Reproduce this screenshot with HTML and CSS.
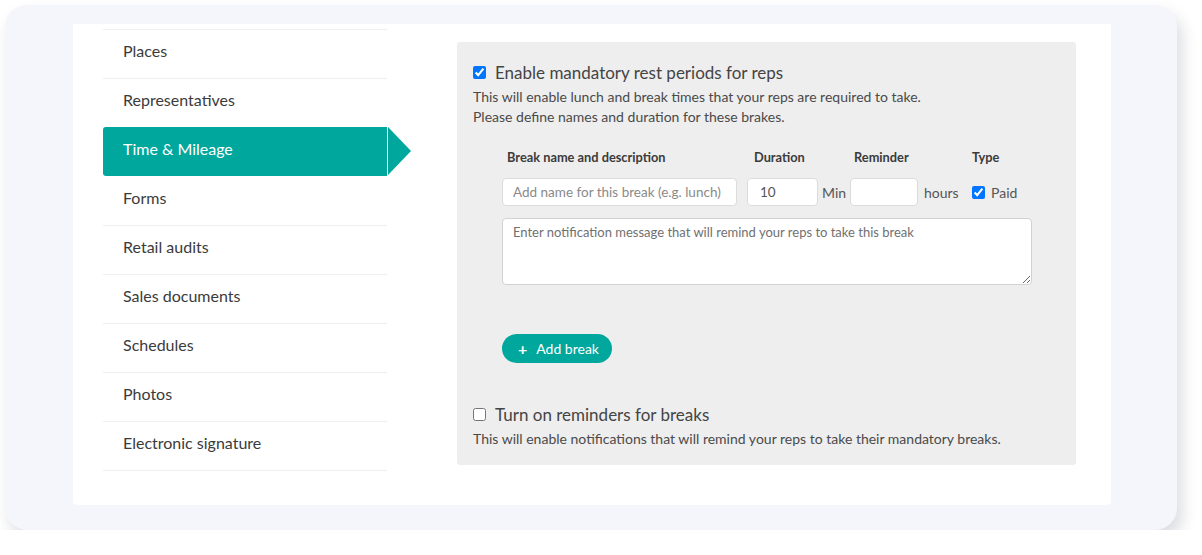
FILE: index.html
```html
<!DOCTYPE html>
<html>
<head>
<meta charset="utf-8">
<link rel="stylesheet" href="styles.css">
</head>
<body>
<div class="frame">
  <div class="card">
    <ul class="nav">
      <li class="nav-item">Places</li>
      <li class="nav-item">Representatives</li>
      <li class="nav-item active">Time &amp; Mileage</li>
      <li class="nav-item">Forms</li>
      <li class="nav-item">Retail audits</li>
      <li class="nav-item">Sales documents</li>
      <li class="nav-item">Schedules</li>
      <li class="nav-item">Photos</li>
      <li class="nav-item">Electronic signature</li>
    </ul>
    <section class="panel">
      <label class="check-row">
        <input type="checkbox" class="cb" checked>
        <span class="check-title">Enable mandatory rest periods for reps</span>
      </label>
      <p class="desc">This will enable lunch and break times that your reps are required to take.<br>Please define names and duration for these brakes.</p>

      <div class="breaks">
        <div class="grid">
          <div class="th th-name">Break name and description</div>
          <div class="th th-dur">Duration</div>
          <div class="th th-rem">Reminder</div>
          <div class="th th-type">Type</div>

          <div class="cell"><input class="inp inp-name" type="text" placeholder="Add name for this break (e.g. lunch)"></div>
          <div class="cell"><input class="inp inp-dur" type="text" value="10"><span class="unit unit-min">Min</span></div>
          <div class="cell"><input class="inp inp-rem" type="text"><span class="unit unit-hours">hours</span></div>
          <div class="cell"><label class="paid"><input type="checkbox" class="cb" checked><span>Paid</span></label></div>
        </div>
        <textarea class="msg" placeholder="Enter notification message that will remind your reps to take this break"></textarea>
        <button class="add-btn"><span class="plus">+</span>Add break</button>
      </div>

      <label class="check-row second">
        <input type="checkbox" class="cb">
        <span class="check-title">Turn on reminders for breaks</span>
      </label>
      <p class="desc">This will enable notifications that will remind your reps to take their mandatory breaks.</p>
    </section>
  </div>
</div>
</body>
</html>
```
FILE: styles.css
```css
* { box-sizing: border-box; }
html, body { margin: 0; padding: 0; background: #ffffff; }
body { font-family: Lato, "Noto Sans", sans-serif; color: #3b3b3b; }

.frame {
  margin: 5px 0 0 5px;
  width: 1172px;
  height: 525px;
  background: #f5f6fb;
  border-radius: 22px;
  box-shadow: 5px 9px 16px rgba(30, 40, 70, 0.16);
  padding: 19px 66px 25px 68px;
}

.card {
  background: #ffffff;
  height: 481px;
  border-radius: 0 0 4px 4px;
  display: flex;
  align-items: flex-start;
  padding: 5px 0 0 30px;
}

.nav {
  list-style: none;
  margin: 0;
  padding: 0;
  width: 284px;
  border-bottom: 1px solid #efefef;
}
.nav-item {
  position: relative;
  height: 49px;
  border-top: 1px solid #efefef;
  padding-left: 20px;
  font-size: 16px;
  line-height: 42px;
  color: #3b3b3b;
}
.nav-item.active {
  background: #00a79d;
  color: #ffffff;
  border-top-color: #00a79d;
  border-radius: 3px 0 0 3px;
  height: 49px;
}
.nav-item.active::after {
  content: "";
  position: absolute;
  left: calc(100% + 1px);
  top: -1px;
  width: 0;
  height: 0;
  border-left: 23px solid #00a79d;
  border-top: 24.5px solid transparent;
  border-bottom: 24.5px solid transparent;
}
.nav-item.active + .nav-item { border-top-color: #ffffff; }

.panel {
  margin: 13px 0 0 70px;
  width: 619px;
  height: 423px;
  background: #eeeeee;
  border-radius: 3px;
  padding: 19px 16px 0 16px;
}

.check-row {
  display: flex;
  align-items: center;
  height: 22px;
}
.cb {
  margin: 0 9px 0 0;
  width: 13px;
  height: 13px;
  flex: none;
}
.check-title {
  font-size: 17px;
  color: #444444;
}
.desc {
  margin: 4px 0 0 0;
  font-size: 14px;
  line-height: 20px;
  color: #4a4a4a;
}

.breaks {
  margin: 22px 0 0 29px;
}
.grid {
  display: grid;
  grid-template-columns: 245px 103px 122px auto;
  row-gap: 13px;
  align-items: center;
}
.th {
  font-size: 12.8px;
  font-weight: bold;
  line-height: 16px;
  color: #3b3b3b;
}
.th-name { padding-left: 5px; }
.th-dur { padding-left: 7px; }
.th-rem { padding-left: 4px; }

.cell { display: flex; align-items: center; }
.inp {
  height: 28px;
  border: 1px solid #dcdcdc;
  border-radius: 4px;
  background: #ffffff;
  font-family: Lato, "Noto Sans", sans-serif;
  font-size: 13.5px;
  color: #555555;
  padding: 0 10px;
  outline: none;
}
.inp::placeholder { color: #8a8a8a; }
.inp-name { width: 235px; }
.inp-dur { width: 71px; padding-left: 12px; }
.inp-rem { width: 68px; }
.unit { font-size: 14px; color: #555555; }
.unit-min { margin-left: 4px; }
.unit-hours { margin-left: 6px; }
.paid { display: flex; align-items: center; font-size: 14px; color: #555555; }
.paid .cb { margin-right: 6px; }

.msg {
  display: block;
  margin-top: 12px;
  width: 530px;
  height: 67px;
  border: 1px solid #d2d2d2;
  border-radius: 4px;
  background: #ffffff;
  font-family: Lato, "Noto Sans", sans-serif;
  font-size: 13px;
  padding: 5px 10px;
  outline: none;
}
.msg::placeholder { color: #707070; }

.add-btn {
  display: flex;
  align-items: center;
  margin-top: 49px;
  width: 110px;
  height: 29px;
  border: none;
  border-radius: 15px;
  background: #00a79d;
  color: #ffffff;
  font-family: Lato, "Noto Sans", sans-serif;
  font-size: 14px;
  padding: 0 0 0 16px;
}
.plus {
  font-weight: bold;
  font-size: 16px;
  margin-right: 9px;
  line-height: 1;
}

.check-row.second { margin-top: 40px; }
```
